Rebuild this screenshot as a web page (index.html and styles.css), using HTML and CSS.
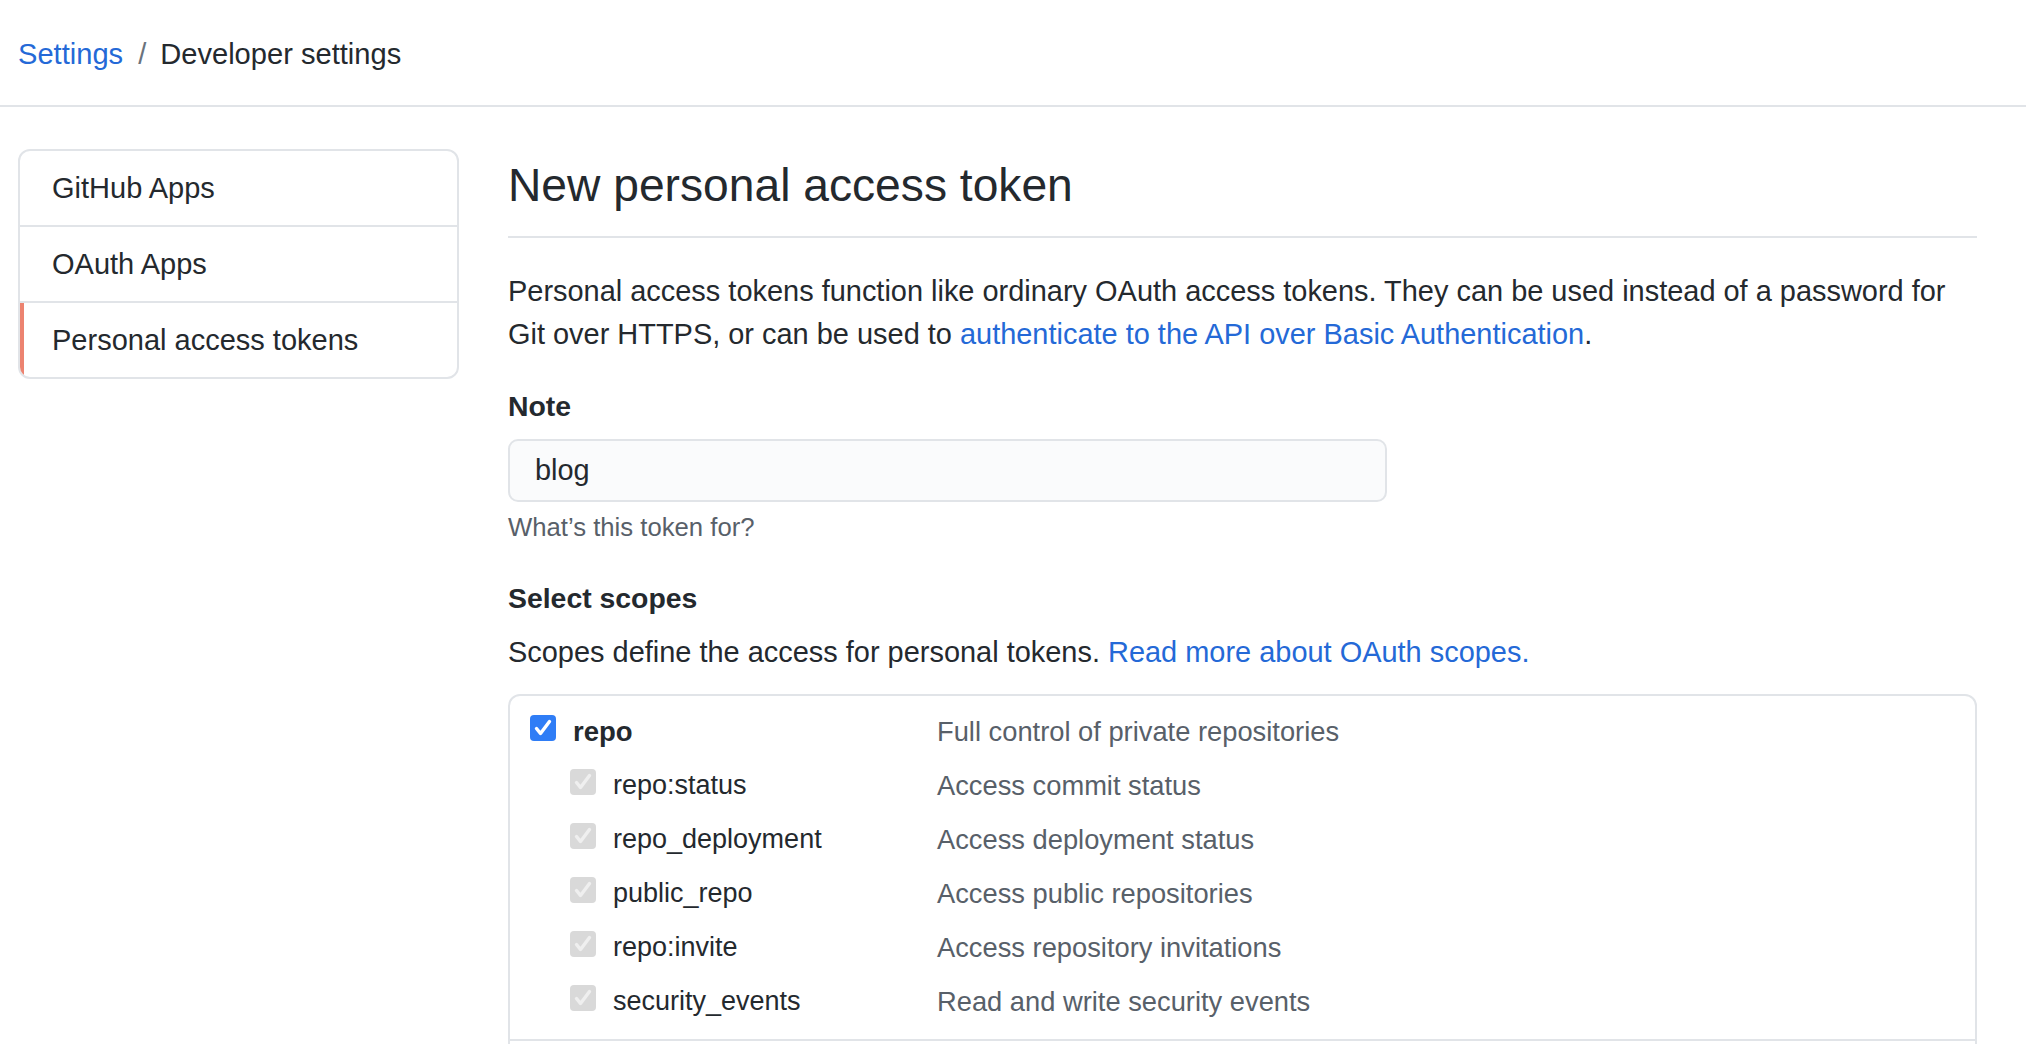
FILE: index.html
```html
<!DOCTYPE html>
<html lang="en">
<head>
<meta charset="utf-8">
<title>New personal access token</title>
<link rel="stylesheet" href="styles.css">
</head>
<body>
<header class="topbar">
  <nav class="breadcrumb">
    <a href="#" class="link">Settings</a><span class="sep">/</span><span class="current">Developer settings</span>
  </nav>
</header>
<main class="layout">
  <aside class="menu">
    <a href="#" class="menu-item">GitHub Apps</a>
    <a href="#" class="menu-item">OAuth Apps</a>
    <a href="#" class="menu-item selected">Personal access tokens</a>
  </aside>
  <section class="content">
    <div class="subhead">
      <h2 class="subhead-heading">New personal access token</h2>
    </div>
    <p class="intro"><span>Personal access tokens function like ordinary OAuth access tokens. They can be used instead of a password for</span> <span>Git over HTTPS, or can be used to</span> <a href="#" class="link">authenticate to the API over Basic Authentication</a><span>.</span></p>
    <div class="form-group">
      <label class="label" for="note">Note</label>
      <input id="note" class="form-control" type="text" value="blog">
      <p class="note">What’s this token for?</p>
    </div>
    <div class="form-group scopes-group">
      <h3 class="label">Select scopes</h3>
      <p class="scopes-desc"><span>Scopes define the access for personal tokens.</span> <a href="#" class="link">Read more about OAuth scopes.</a></p>
      <div class="scope-box">
        <div class="scope-group">
          <div class="scope-row">
            <div class="scope-name">
              <svg class="cb" viewBox="0 0 26 26" aria-hidden="true"><rect width="26" height="26" rx="4" fill="#2f7df6"/><path d="M6.5 13.5 L10.5 18.5 L19.5 6.5" fill="none" stroke="#fff" stroke-width="3.4" stroke-linecap="round" stroke-linejoin="round"/></svg>
              <strong>repo</strong>
            </div>
            <div class="scope-desc">Full control of private repositories</div>
          </div>
          <div class="scope-row sub">
            <div class="scope-name">
              <svg class="cb" viewBox="0 0 26 26" aria-hidden="true"><rect width="26" height="26" rx="4" fill="#d9d9d9"/><path d="M6.5 13.5 L10.5 18.5 L19.5 6.5" fill="none" stroke="#efefef" stroke-width="3.4" stroke-linecap="round" stroke-linejoin="round"/></svg>
              <span>repo:status</span>
            </div>
            <div class="scope-desc">Access commit status</div>
          </div>
          <div class="scope-row sub">
            <div class="scope-name">
              <svg class="cb" viewBox="0 0 26 26" aria-hidden="true"><rect width="26" height="26" rx="4" fill="#d9d9d9"/><path d="M6.5 13.5 L10.5 18.5 L19.5 6.5" fill="none" stroke="#efefef" stroke-width="3.4" stroke-linecap="round" stroke-linejoin="round"/></svg>
              <span>repo_deployment</span>
            </div>
            <div class="scope-desc">Access deployment status</div>
          </div>
          <div class="scope-row sub">
            <div class="scope-name">
              <svg class="cb" viewBox="0 0 26 26" aria-hidden="true"><rect width="26" height="26" rx="4" fill="#d9d9d9"/><path d="M6.5 13.5 L10.5 18.5 L19.5 6.5" fill="none" stroke="#efefef" stroke-width="3.4" stroke-linecap="round" stroke-linejoin="round"/></svg>
              <span>public_repo</span>
            </div>
            <div class="scope-desc">Access public repositories</div>
          </div>
          <div class="scope-row sub">
            <div class="scope-name">
              <svg class="cb" viewBox="0 0 26 26" aria-hidden="true"><rect width="26" height="26" rx="4" fill="#d9d9d9"/><path d="M6.5 13.5 L10.5 18.5 L19.5 6.5" fill="none" stroke="#efefef" stroke-width="3.4" stroke-linecap="round" stroke-linejoin="round"/></svg>
              <span>repo:invite</span>
            </div>
            <div class="scope-desc">Access repository invitations</div>
          </div>
          <div class="scope-row sub">
            <div class="scope-name">
              <svg class="cb" viewBox="0 0 26 26" aria-hidden="true"><rect width="26" height="26" rx="4" fill="#d9d9d9"/><path d="M6.5 13.5 L10.5 18.5 L19.5 6.5" fill="none" stroke="#efefef" stroke-width="3.4" stroke-linecap="round" stroke-linejoin="round"/></svg>
              <span>security_events</span>
            </div>
            <div class="scope-desc">Read and write security events</div>
          </div>
        </div>
      </div>
    </div>
  </section>
</main>
</body>
</html>
```
FILE: styles.css
```css
html, body {
  margin: 0;
  padding: 0;
  overflow: hidden;
  background: #ffffff;
}

body {
  font-family: "Liberation Sans", Arial, sans-serif;
  font-size: 28.95px;
  line-height: 43px;
  color: #24292e;
}

.link {
  color: #2469d7;
  text-decoration: none;
}

/* Header */
.topbar {
  padding: 33px 18px 29px;
  border-bottom: 2px solid #e1e4e8;
}

.breadcrumb {
  display: flex;
  align-items: center;
  font-size: 29.1px;
}

.sep {
  color: #6a737d;
  padding: 0 14px 0 15px;
}

/* Layout */
.layout {
  display: grid;
  grid-template-columns: 441px 1fr;
  column-gap: 49px;
  padding: 42px 49px 0 18px;
}

/* Side menu */
.menu {
  align-self: start;
  display: flex;
  flex-direction: column;
  border: 2px solid #e1e4e8;
  border-radius: 12px;
  overflow: hidden;
}

.menu-item {
  display: block;
  padding: 16px 33px 16px 32px;
  line-height: 42px;
  font-size: 29px;
  color: #24292e;
  text-decoration: none;
  border-bottom: 2px solid #e1e4e8;
}

.menu-item:last-child {
  border-bottom: 0;
}

.menu-item.selected {
  box-shadow: inset 4px 0 0 #ec8370;
}

/* Content */
.content {
  min-width: 0;
}

.subhead {
  padding-bottom: 15px;
  border-bottom: 2px solid #e1e4e8;
  margin-bottom: 32px;
}

.subhead-heading {
  margin: 0;
  font-size: 46.2px;
  font-weight: 400;
  line-height: 72px;
}

.intro {
  margin: 0;
}

.form-group {
  margin-top: 29px;
}

.label {
  display: block;
  margin: 0;
  font-size: 28.4px;
  font-weight: 700;
  line-height: 43px;
}

.form-control {
  display: block;
  box-sizing: border-box;
  width: 879px;
  height: 63px;
  margin-top: 11px;
  padding: 0 25px;
  font-family: inherit;
  font-size: 28.9px;
  color: #24292e;
  background: #fafbfc;
  border: 2px solid #e1e4e8;
  border-radius: 10px;
  outline: none;
}

.note {
  margin: 6px 0 0;
  font-size: 25.7px;
  line-height: 39px;
  color: #586069;
}

.scopes-group {
  margin-top: 30px;
}

.scopes-desc {
  margin: 11px 0 0;
}

.scope-box {
  margin-top: 20px;
  padding-bottom: 40px;
  border: 2px solid #e1e4e8;
  border-radius: 12px;
}

.scope-group {
  padding: 8px 0 11px;
  border-bottom: 2px solid #e1e4e8;
}

.scope-row {
  display: flex;
  align-items: center;
  height: 54px;
  padding-left: 20px;
  font-size: 27px;
}

.scope-name {
  box-sizing: border-box;
  width: 407px;
  display: flex;
  align-items: center;
  gap: 17px;
}

.scope-row.sub .scope-name {
  padding-left: 40px;
}

.scope-name strong {
  font-weight: 700;
  font-size: 27.5px;
}

.cb {
  flex: none;
  width: 26px;
  height: 26px;
  margin-bottom: 6px;
}

.scope-desc {
  color: #586069;
  font-size: 27.3px;
}
```
